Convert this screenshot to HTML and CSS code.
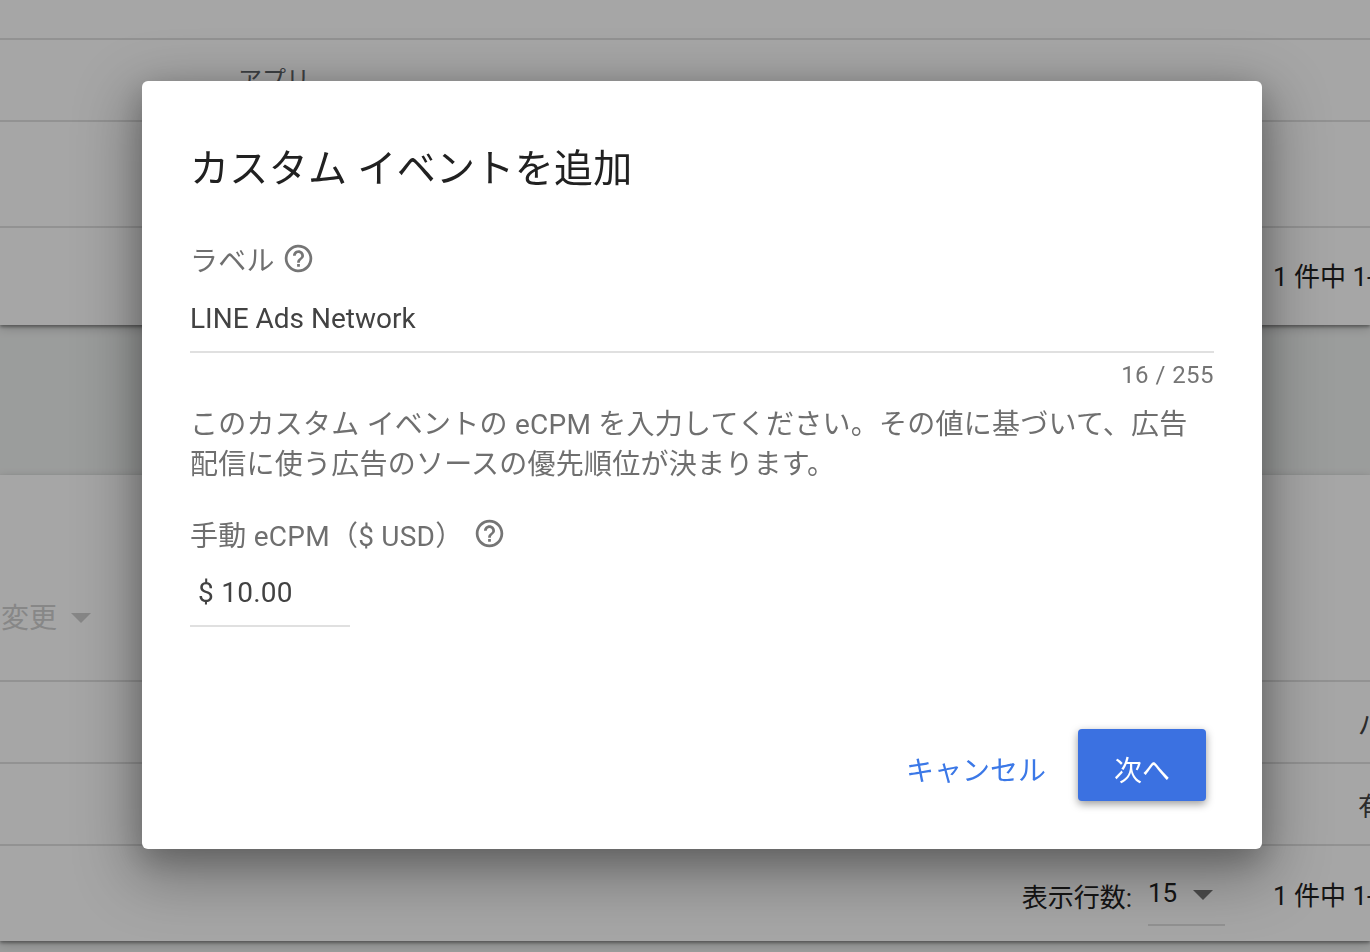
FILE: index.html
```html
<!DOCTYPE html>
<html lang="ja">
<head>
<meta charset="utf-8">
<title>カスタム イベントを追加</title>
<link rel="stylesheet" href="styles.css">
</head>
<body>
<main class="page">
  <section class="card card-top">
    <div class="row row-a"></div>
    <div class="row row-b"><span class="app-label">アプリ</span></div>
    <div class="row row-c"></div>
    <div class="row row-d"><span class="count">1 件中 1-1</span></div>
  </section>
  <section class="card card-bottom">
    <div class="row row-filter"><span class="change">変更<i class="caret caret-faint"></i></span></div>
    <div class="row row-e"><span class="cell-end">パ</span></div>
    <div class="row row-e"><span class="cell-end">有</span></div>
    <div class="row row-foot">
      <span class="rows-label">表示行数:</span>
      <span class="rows-select">15<i class="caret"></i></span>
      <span class="count">1 件中 1-1</span>
    </div>
  </section>
</main>
<div class="scrim"></div>
<div class="dialog" role="dialog">
  <h1 class="title">カスタム イベントを追加</h1>
  <div class="field-label label-first">ラベル
    <svg class="help" viewBox="0 0 24 24"><path d="M11 18h2v-2h-2v2zm1-16C6.48 2 2 6.48 2 12s4.48 10 10 10 10-4.48 10-10S17.52 2 12 2zm0 18c-4.41 0-8-3.59-8-8s3.59-8 8-8 8 3.59 8 8-3.59 8-8 8zm0-14c-2.21 0-4 1.79-4 4h2c0-1.1.9-2 2-2s2 .9 2 2c0 2-3 1.75-3 5h2c0-2.25 3-2.5 3-5 0-2.21-1.79-4-4-4z"/></svg>
  </div>
  <div class="input input-label">LINE Ads Network</div>
  <div class="counter">16 / 255</div>
  <p class="desc">このカスタム イベントの eCPM を入力してください。その値に基づいて、広告配信に使う広告のソースの優先順位が決まります。</p>
  <div class="field-label label-second">手動 eCPM（$ USD）
    <svg class="help help-second" viewBox="0 0 24 24"><path d="M11 18h2v-2h-2v2zm1-16C6.48 2 2 6.48 2 12s4.48 10 10 10 10-4.48 10-10S17.52 2 12 2zm0 18c-4.41 0-8-3.59-8-8s3.59-8 8-8 8 3.59 8 8-3.59 8-8 8zm0-14c-2.21 0-4 1.79-4 4h2c0-1.1.9-2 2-2s2 .9 2 2c0 2-3 1.75-3 5h2c0-2.25 3-2.5 3-5 0-2.21-1.79-4-4-4z"/></svg>
  </div>
  <div class="input input-money">$ 10.00</div>
  <div class="actions">
    <button class="btn btn-text">キャンセル</button>
    <button class="btn btn-primary">次へ</button>
  </div>
</div>
</body>
</html>
```
FILE: styles.css
```css
* { box-sizing: border-box; }
html, body { margin: 0; height: 952px; overflow: hidden; }
body {
  font-family: Roboto, "Noto Sans CJK JP", sans-serif;
  background: #eff1f0;
  color: #212121;
}
.page { display: flex; flex-direction: column; gap: 150px; height: 952px; overflow: hidden; }
.card {
  display: flex; flex-direction: column;
  background: #fff;
  box-shadow: 0 2px 3px rgba(0,0,0,.35), 0 3px 10px rgba(0,0,0,.2);
  overflow: hidden;
}
.card-top { height: 325px; }
.card-bottom { height: 466px; }
.row { display: flex; align-items: center; border-bottom: 2px solid #e0e0e0; flex: none; position: relative; }
.row:last-child { border-bottom: 0; }
.row-a { height: 40px; }
.row-b { height: 82px; padding-left: 238px; }
.row-c { height: 106px; }
.row-d { height: 97px; justify-content: flex-end; padding-bottom: 4px; }
.row-filter { height: 207px; padding-top: 76px; }
.row-e { height: 82px; justify-content: flex-end; }
.row-foot { height: 95px; justify-content: flex-end; }
.app-label { font-size: 24px; color: #5f6368; line-height: 30px; }
.change { font-size: 28px; color: #cfcfcf; display: flex; align-items: center; gap: 14px; margin-left: 1px; white-space: nowrap; }
.caret { display: inline-block; width: 0; height: 0; border: 10px solid transparent; border-top-color: #757575; border-bottom: 0; position: relative; top: 2px; }
.caret-faint { border-top-color: #cfcfcf; }
.cell-end { font-size: 26px; width: 12px; overflow: hidden; white-space: nowrap; color: #424242; }
.count { font-size: 26px; width: 97px; overflow: hidden; white-space: nowrap; color: #212121; }
.rows-label { font-size: 26px; margin-right: 16px; padding-top: 4px; }
.rows-select {
  display: flex; align-items: center; gap: 16px; width: 77px; height: 64px;
  font-size: 26px; border-bottom: 2px solid #e0e0e0; margin-right: 48px; padding-bottom: 0;
}
.scrim { position: fixed; inset: 0; background: rgba(0,0,0,.35); }
.dialog {
  position: absolute; left: 142px; top: 81px; width: 1120px; height: 768px;
  background: #fff; border-radius: 6px; padding: 0 48px;
  box-shadow: 0 20px 60px 10px rgba(0,0,0,.3), 0 10px 30px rgba(0,0,0,.2);
  display: flex; flex-direction: column;
}
.title { margin: 60px 0 0; font-size: 39px; letter-spacing: .33px; font-weight: 400; line-height: 56px; color: #212121; white-space: nowrap; }
.field-label { display: flex; align-items: center; font-size: 28px; letter-spacing: .25px; color: #6f6f6f; line-height: 40px; white-space: nowrap; }
.label-first { margin-top: 45px; }
.help { width: 33px; height: 33px; fill: #757575; margin-left: 7px; margin-top: -8px; }
.help-second { margin-left: 10px; margin-top: -8px; }
.input { font-size: 28px; letter-spacing: .25px; color: #424242; white-space: nowrap; border-bottom: 2px solid #e0e0e0; }
.input-label { height: 53px; line-height: 38px; margin-top: 18px; letter-spacing: 0; }
.counter { font-size: 24px; letter-spacing: .45px; color: #757575; text-align: right; line-height: 30px; margin-top: 7px; }
.desc { margin: 15px 0 0; font-size: 28px; letter-spacing: .24px; line-height: 40px; color: #6f6f6f; }
.label-second { margin-top: 32px; }
.input-money { width: 160px; height: 54px; line-height: 40px; padding-left: 8px; margin-top: 16px; }
.actions { display: flex; align-items: center; justify-content: flex-end; gap: 32px; margin-top: auto; margin-bottom: 48px; padding-right: 8px; }
.btn { font-family: inherit; font-size: 28px; border: 0; border-radius: 4px; height: 72px; background: transparent; padding: 8px 0 0; }
.btn-text { color: #3b78e7; }
.btn-primary { width: 128px; background: #3b71e1; color: #fff; box-shadow: 0 3px 8px rgba(0,0,0,.4); }
```
